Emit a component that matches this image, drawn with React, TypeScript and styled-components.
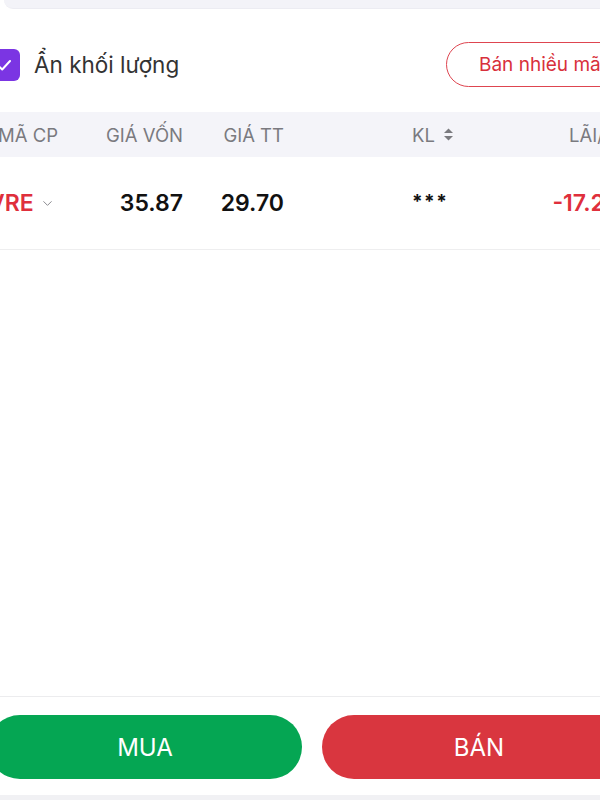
import React from "react";
import styled, { createGlobalStyle } from "styled-components";
import { ChevronDown } from "lucide-react";

const Global = createGlobalStyle`
  html, body { margin: 0; padding: 0; background: #ffffff; }
  body { font-family: Inter, "Noto Sans", Roboto, sans-serif; -webkit-font-smoothing: antialiased; }
`;

const Page = styled.div`
  width: 600px;
  height: 800px;
  overflow: hidden;
  background: #ffffff;
  display: flex;
  flex-direction: column;
`;

const Inner = styled.div`
  width: 648px;
  margin-left: -12px;
  flex: 1;
  display: flex;
  flex-direction: column;
`;

const TopStrip = styled.div`
  height: 8px;
  margin-left: 16px;
  background: #f3f3f8;
  border-bottom-left-radius: 10px;
  border-bottom: 1px solid #ececf2;
`;

const Toolbar = styled.div`
  margin-top: 33px;
  height: 45px;
  display: flex;
  align-items: center;
  justify-content: space-between;
`;

const CheckLabel = styled.label`
  display: flex;
  align-items: center;
  gap: 14px;
  font-size: 22.5px;
  color: #333333;
`;

const Box = styled.span`
  width: 32px;
  height: 32px;
  border-radius: 6px;
  background: #7b35e3;
  display: flex;
  align-items: center;
  justify-content: center;
`;

const OutlineButton = styled.button`
  height: 45px;
  width: 190px;
  padding: 0 0 0 32px;
  text-align: left;
  border: 1.5px solid #de4550;
  border-radius: 23px;
  background: #ffffff;
  color: #d8303b;
  font-family: inherit;
  font-size: 19px;
  white-space: nowrap;
  overflow: hidden;
`;

const Grid = styled.div<{ $head?: boolean }>`
  display: grid;
  grid-template-columns: 122px 73px 101px 240px 104px;
  align-items: center;
  height: ${(p) => (p.$head ? "45px" : "92px")};
  margin-top: ${(p) => (p.$head ? "25px" : "0")};
  background: ${(p) => (p.$head ? "#f4f4f9" : "#ffffff")};
  border-bottom: ${(p) => (p.$head ? "none" : "1px solid #eeeeef")};
`;

const HeadCell = styled.div<{ $align?: "left" | "right"; $pad?: number }>`
  font-size: 18.5px;
  color: #7a7a7f;
  padding-left: ${(p) => p.$pad || 0}px;
  display: flex;
  align-items: center;
  justify-content: ${(p) => (p.$align === "right" ? "flex-end" : "flex-start")};
  gap: 8px;
  white-space: nowrap;
`;

const Cell = styled.div<{ $align?: "left" | "right"; $pad?: number; $red?: boolean }>`
  font-size: 23px;
  font-weight: 600;
  color: ${(p) => (p.$red ? "#df2f3c" : "#111111")};
  padding-left: ${(p) => p.$pad || 0}px;
  display: flex;
  align-items: center;
  justify-content: ${(p) => (p.$align === "right" ? "flex-end" : "flex-start")};
  gap: 6px;
  white-space: nowrap;
`;

const Stars = styled.span`
  font-size: 19px;
  font-weight: 700;
  letter-spacing: 1.5px;
  position: relative;
  top: -2px;
`;

const Spacer = styled.div`
  flex: 1;
`;

const Footer = styled.div`
  border-top: 1px solid #ececee;
  padding: 18px 0 16px;
  display: grid;
  grid-template-columns: 1fr 1fr;
  gap: 20px;
`;

const Action = styled.button<{ $color: string }>`
  height: 64px;
  border: none;
  border-radius: 32px;
  background: ${(p) => p.$color};
  color: #ffffff;
  font-family: inherit;
  font-size: 24px;
  font-weight: 400;
`;

const BottomStrip = styled.div`
  height: 5px;
  background: #f1f1f4;
`;

const SortIcon = () => (
  <svg width="11" height="13" viewBox="0 0 11 13">
    <path d="M5.5 0.5 L10 5 H1 Z" fill="#7a7a7f" />
    <path d="M5.5 12.5 L10 8 H1 Z" fill="#7a7a7f" />
  </svg>
);

export default function App() {
  return (
    <>
      <Global />
      <Page>
        <Inner>
          <TopStrip />
          <Toolbar>
            <CheckLabel>
              <Box>
                <svg width="20" height="20" viewBox="0 0 20 20">
                  <path d="M4 10.5 L8.2 14.5 L16 6" fill="none" stroke="#ffffff" strokeWidth="2" strokeLinecap="round" strokeLinejoin="round" />
                </svg>
              </Box>
              Ẩn khối lượng
            </CheckLabel>
            <OutlineButton>Bán nhiều mã</OutlineButton>
          </Toolbar>
          <Grid $head>
            <HeadCell $pad={10}>MÃ CP</HeadCell>
            <HeadCell $align="right">GIÁ VỐN</HeadCell>
            <HeadCell $align="right">GIÁ TT</HeadCell>
            <HeadCell $pad={128}>
              KL <SortIcon />
            </HeadCell>
            <HeadCell $align="right">LÃI/LỖ</HeadCell>
          </Grid>
          <Grid>
            <Cell $red>
              VRE <ChevronDown size={15} color="#8a8a8f" strokeWidth={1.6} />
            </Cell>
            <Cell $align="right">35.87</Cell>
            <Cell $align="right">29.70</Cell>
            <Cell $pad={128}>
              <Stars>***</Stars>
            </Cell>
            <Cell $align="right" $red>-17.2%</Cell>
          </Grid>
          <Spacer />
          <Footer>
            <Action $color="#05a653">MUA</Action>
            <Action $color="#d9363f">BÁN</Action>
          </Footer>
          <BottomStrip />
        </Inner>
      </Page>
    </>
  );
}
